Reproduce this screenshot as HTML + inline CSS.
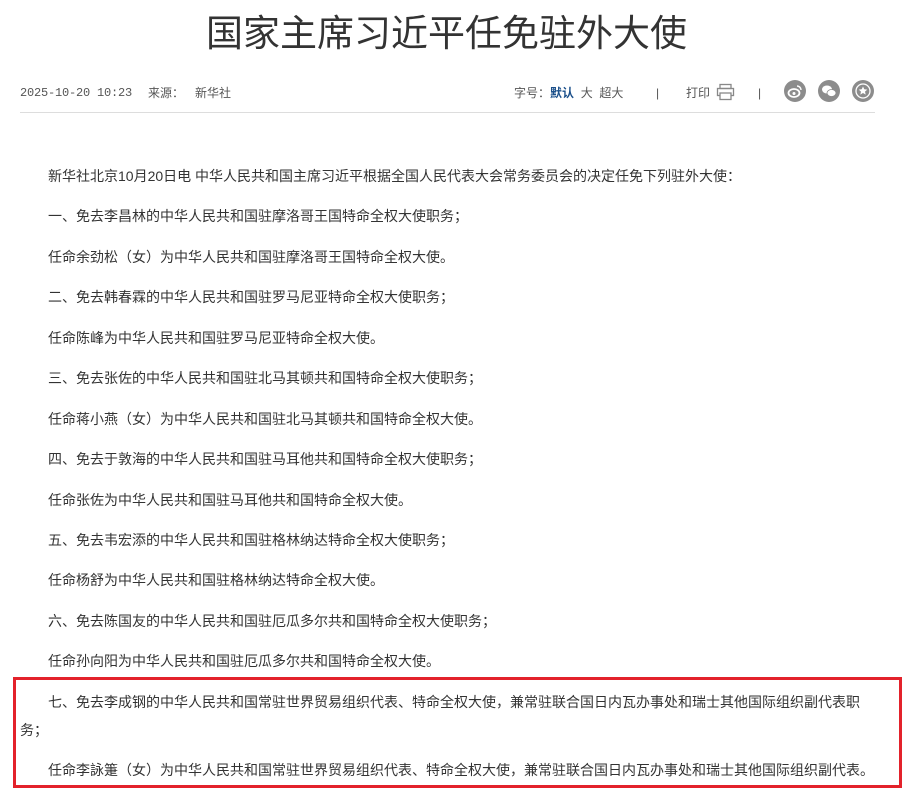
<!DOCTYPE html>
<html><head><meta charset="utf-8"><style>
*{margin:0;padding:0;box-sizing:border-box}
body{width:905px;height:787px;overflow:hidden;background:#fff;font-family:"Liberation Sans","Noto Sans CJK SC",sans-serif;color:#333;position:relative}
h1{position:absolute;left:0;width:893px;top:11px;text-align:center;font-size:37px;font-weight:normal;color:#333;line-height:46px}
.t{position:absolute;top:84px;font-size:12px;color:#555;line-height:18px;white-space:nowrap}
.t b{color:#1a4f8a}
.ic{position:absolute;top:80px;width:22px;height:22px;border-radius:50%;background:#8c8c8c}
.hr{position:absolute;top:112px;left:20px;width:855px;height:1px;background:#ddd}
.content{position:absolute;left:20px;top:162px;width:855px;font-size:14px;line-height:28px;color:#333}
.content p{text-indent:28px;margin-bottom:12.45px}
.box{position:absolute;left:13px;top:677px;width:889px;height:111px;border:3px solid #e3222b}
</style></head><body>
<h1>国家主席习近平任免驻外大使</h1>
<div class="t" style="left:20px;font-family:'Liberation Mono',monospace;font-size:12px;letter-spacing:-0.2px">2025-10-20 10:23</div>
<div class="t" style="left:148px">来源：</div>
<div class="t" style="left:195px">新华社</div>
<div class="t" style="left:514px">字号：<b>默认</b>&nbsp;&nbsp;大&nbsp;&nbsp;超大</div>
<div class="t" style="left:656px">|</div>
<div class="t" style="left:686px">打印</div>
<svg style="position:absolute;left:716px;top:83px" width="20" height="18" viewBox="0 0 20 18"><rect x="4" y="1.5" width="11" height="4" fill="none" stroke="#888" stroke-width="1.3"/><rect x="1.5" y="5.5" width="16" height="7" fill="none" stroke="#888" stroke-width="1.3"/><rect x="4" y="10" width="11" height="6.5" fill="#fff" stroke="#888" stroke-width="1.3"/></svg>
<div class="t" style="left:758px">|</div>
<div class="ic" style="left:784px"><svg width="22" height="22" viewBox="0 0 22 22"><ellipse cx="10" cy="13" rx="5.5" ry="4" fill="none" stroke="#fff" stroke-width="1.8"/><circle cx="10" cy="13.5" r="1.5" fill="#fff"/><path d="M13 6a4 4 0 0 1 4 4" stroke="#fff" stroke-width="1.5" fill="none"/></svg></div>
<div class="ic" style="left:818px"><svg width="22" height="22" viewBox="0 0 22 22"><ellipse cx="9" cy="9.5" rx="5" ry="4" fill="#fff"/><ellipse cx="13.5" cy="13" rx="4.5" ry="3.5" fill="#fff" stroke="#8c8c8c" stroke-width="0.8"/></svg></div>
<div class="ic" style="left:852px"><svg width="22" height="22" viewBox="0 0 22 22"><circle cx="11" cy="11" r="7" fill="none" stroke="#fff" stroke-width="1.3"/><path d="M11 6.5l1.3 2.8 3 .3-2.3 2 .7 3-2.7-1.6-2.7 1.6.7-3-2.3-2 3-.3z" fill="#fff"/></svg></div>
<div class="hr"></div>
<div class="content">
<p>新华社北京10月20日电 中华人民共和国主席习近平根据全国人民代表大会常务委员会的决定任免下列驻外大使：</p>
<p>一、免去李昌林的中华人民共和国驻摩洛哥王国特命全权大使职务；</p>
<p>任命余劲松（女）为中华人民共和国驻摩洛哥王国特命全权大使。</p>
<p>二、免去韩春霖的中华人民共和国驻罗马尼亚特命全权大使职务；</p>
<p>任命陈峰为中华人民共和国驻罗马尼亚特命全权大使。</p>
<p>三、免去张佐的中华人民共和国驻北马其顿共和国特命全权大使职务；</p>
<p>任命蒋小燕（女）为中华人民共和国驻北马其顿共和国特命全权大使。</p>
<p>四、免去于敦海的中华人民共和国驻马耳他共和国特命全权大使职务；</p>
<p>任命张佐为中华人民共和国驻马耳他共和国特命全权大使。</p>
<p>五、免去韦宏添的中华人民共和国驻格林纳达特命全权大使职务；</p>
<p>任命杨舒为中华人民共和国驻格林纳达特命全权大使。</p>
<p>六、免去陈国友的中华人民共和国驻厄瓜多尔共和国特命全权大使职务；</p>
<p>任命孙向阳为中华人民共和国驻厄瓜多尔共和国特命全权大使。</p>
<p>七、免去李成钢的中华人民共和国常驻世界贸易组织代表、特命全权大使，兼常驻联合国日内瓦办事处和瑞士其他国际组织副代表职务；</p>
<p>任命李詠箑（女）为中华人民共和国常驻世界贸易组织代表、特命全权大使，兼常驻联合国日内瓦办事处和瑞士其他国际组织副代表。</p>
</div>
<div class="box"></div>
</body></html>
